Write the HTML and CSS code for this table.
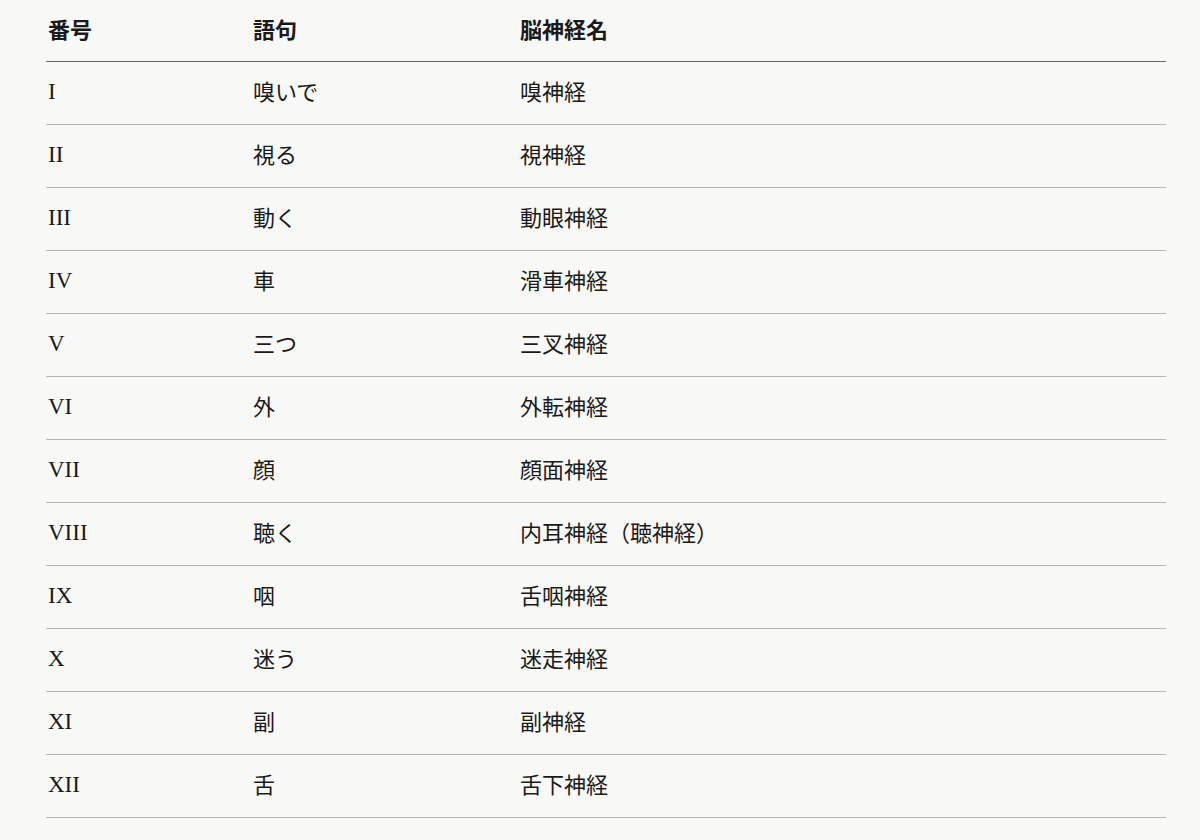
FILE: index.html
```html
<!DOCTYPE html>
<html lang="ja">
<head>
<meta charset="utf-8">
<link rel="stylesheet" href="styles.css">
</head>
<body>
<div class="wrap">
<table class="nerves">
<thead>
<tr><th class="c1">番号</th><th class="c2">語句</th><th class="c3">脳神経名</th></tr>
</thead>
<tbody>
<tr><td class="num">I</td><td>嗅いで</td><td>嗅神経</td></tr>
<tr><td class="num">II</td><td>視る</td><td>視神経</td></tr>
<tr><td class="num">III</td><td>動く</td><td>動眼神経</td></tr>
<tr><td class="num">IV</td><td>車</td><td>滑車神経</td></tr>
<tr><td class="num">V</td><td>三つ</td><td>三叉神経</td></tr>
<tr><td class="num">VI</td><td>外</td><td>外転神経</td></tr>
<tr><td class="num">VII</td><td>顔</td><td>顔面神経</td></tr>
<tr><td class="num">VIII</td><td>聴く</td><td>内耳神経（聴神経）</td></tr>
<tr><td class="num">IX</td><td>咽</td><td>舌咽神経</td></tr>
<tr><td class="num">X</td><td>迷う</td><td>迷走神経</td></tr>
<tr><td class="num">XI</td><td>副</td><td>副神経</td></tr>
<tr><td class="num">XII</td><td>舌</td><td>舌下神経</td></tr>
</tbody>
</table>
</div>
</body>
</html>
```
FILE: styles.css
```css
html, body {
  margin: 0;
  padding: 0;
  background: #f8f8f6;
}
.wrap {
  padding: 0 34px 0 46px;
}
.nerves {
  width: 1120px;
  border-collapse: collapse;
  table-layout: fixed;
  color: #1a1a1a;
  font-family: "Noto Sans CJK JP", "Noto Sans", sans-serif;
  font-size: 22px;
}
.nerves th,
.nerves td {
  box-sizing: border-box;
  padding: 0 0 5px 2px;
  vertical-align: middle;
  line-height: 1;
  text-align: left;
}
.nerves th {
  font-weight: 700;
  height: 61px;
  border-bottom: 1px solid #6a6a6a;
}
.c1 { width: 205px; }
.c2 { width: 267px; }
.c3 { width: auto; }
.nerves td {
  height: 63px;
  border-bottom: 1px solid #b4b4b2;
}
.nerves td.num {
  font-family: "Liberation Serif", "Times New Roman", serif;
  font-size: 23px;
  padding-bottom: 2px;
}
```
